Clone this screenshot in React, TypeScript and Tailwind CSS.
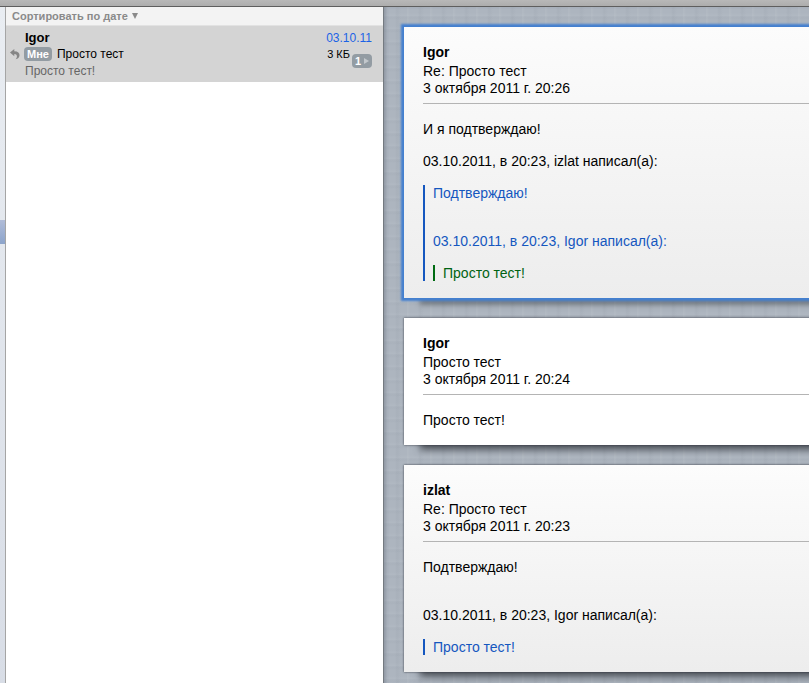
import type { ReactNode } from "react";

interface MessageCardProps {
  from: string;
  subject: string;
  date: string;
  selected?: boolean;
  plain?: boolean;
  children: ReactNode;
}

function MessageCard({ from, subject, date, selected, plain, children }: MessageCardProps) {
  const frame = selected
    ? "shadow-[0_0_2px_3px_#4480cf,16px_7px_5px_rgba(60,65,72,0.5)]"
    : "shadow-[0_0_2px_rgba(40,44,52,0.9),16px_5px_7px_rgba(50,54,60,0.75)]";
  const fill = plain ? "bg-white" : "bg-linear-to-b from-[#fcfcfc] to-[#ededed]";

  return (
    <article className={`px-[19px] py-[17px] text-sm leading-4 text-black ${frame} ${fill}`}>
      <header className="mb-[17px] border-b border-[#b4b4b4] pb-[6px]">
        <h2 className="mb-[3px] font-bold">{from}</h2>
        <p className="leading-[17px]">{subject}</p>
        <p className="leading-[17px]">{date}</p>
      </header>
      <div className="flex flex-col gap-4">{children}</div>
    </article>
  );
}

function Quote({ nested, children }: { nested?: boolean; children: ReactNode }) {
  const color = nested ? "border-[#006b12] text-[#006312]" : "border-[#1557bf] text-[#1557bf]";
  return <blockquote className={`flex flex-col gap-4 border-l-2 pl-2 ${color}`}>{children}</blockquote>;
}

function MessageList() {
  return (
    <section className="w-[378px] shrink-0 border-r border-[#747a80] bg-white">
      <button
        type="button"
        className="flex h-[19px] w-full items-center gap-1 border-b border-[#e2e2e2] bg-[#f3f3f3] px-[6px] text-[11px] font-bold text-[#8a8a8a]"
      >
        Сортировать по дате
        <svg width="6" height="6" viewBox="0 0 6 6" fill="currentColor" aria-hidden="true">
          <path d="M0 0h6L3 6z" />
        </svg>
      </button>

      <ul>
        <li className="flex h-14 justify-between bg-[#d4d4d4] pt-1 pr-[11px] pl-1">
          <div className="grid grid-cols-[15px_auto] grid-rows-[16px_16px_18px] items-center text-xs">
            <span className="col-start-2 text-[13px] font-bold">Igor</span>
            <svg className="col-start-1" width="10" height="12" viewBox="0 0 10 12" aria-label="Отвечено" role="img">
              <path d="M0 4.5 4.3 1v2.3C8 3.3 9.7 5 9.5 7.4 9.4 9.3 8 10.8 5.6 11.2 7.6 9.6 7.6 6 4.3 6v2.2z" fill="#858585" />
            </svg>
            <span className="flex items-center gap-[5px]">
              <span className="-ml-px h-[14px] rounded bg-[#939ca3] px-[3px] text-[11px] leading-[14px] font-bold text-white">Мне</span>
              Просто тест
            </span>
            <span className="col-start-2 text-[#666]">Просто тест!</span>
          </div>
          <div className="flex flex-col items-end">
            <time className="text-xs leading-4 text-[#1b63e6]">03.10.11</time>
            <div className="flex items-start gap-[2px]">
              <span className="text-[11px] leading-4">3 КБ</span>
              <button
                type="button"
                aria-label="Показать 1 сообщение"
                className="mt-2 flex h-[14px] w-5 items-center justify-center gap-[3px] rounded bg-[#939ca3] text-[11px] leading-[14px] font-bold text-white"
              >
                1
                <svg width="5" height="6" viewBox="0 0 5 6" fill="#c3c8cc" aria-hidden="true">
                  <path d="M0 0l5 3-5 3z" />
                </svg>
              </button>
            </div>
          </div>
        </li>
      </ul>
    </section>
  );
}

export default function App() {
  return (
    <div className="flex min-h-screen flex-col overflow-hidden bg-white font-['Liberation_Sans',Arial,sans-serif]">
      {/* Bottom edge of the window toolbar */}
      <div className="h-[7px] border-b border-[#5e5e5e] bg-linear-to-b from-[#b8b8b8] to-[#adadad]" />

      <div className="flex flex-1">
        {/* Mailboxes, collapsed to a sliver */}
        <nav aria-label="Ящики" className="w-[6px] shrink-0 border-r border-[#a5a5a5] bg-linear-to-b from-[#e9edf2] to-[#d8dde6] pt-[213px]">
          <div className="h-6 bg-linear-to-b from-[#b0bcd8] to-[#8ca4cb]" />
        </nav>

        <MessageList />

        {/* Linen: thin threads at uneven spacing in both directions */}
        <main className="-mr-5 flex min-w-0 flex-1 flex-col gap-5 bg-[#adb5bf] bg-[repeating-linear-gradient(90deg,rgba(255,255,255,0.05)_0_1px,transparent_3px_11px,rgba(60,70,85,0.04)_13px,transparent_17px_23px),repeating-linear-gradient(0deg,rgba(255,255,255,0.04)_0_1px,transparent_3px_9px,rgba(60,70,85,0.03)_11px,transparent_13px)] py-5 pl-5 shadow-[inset_3px_0_3px_-1px_rgba(70,80,95,0.3)]">
          <MessageCard from="Igor" subject="Re: Просто тест" date="3 октября 2011 г. 20:26" selected>
            <p>И я подтверждаю!</p>
            <p>03.10.2011, в 20:23, izlat написал(а):</p>
            <Quote>
              <p className="mb-4">Подтверждаю!</p>
              <p>03.10.2011, в 20:23, Igor написал(а):</p>
              <Quote nested>
                <p>Просто тест!</p>
              </Quote>
            </Quote>
          </MessageCard>

          <MessageCard from="Igor" subject="Просто тест" date="3 октября 2011 г. 20:24" plain>
            <p>Просто тест!</p>
          </MessageCard>

          <MessageCard from="izlat" subject="Re: Просто тест" date="3 октября 2011 г. 20:23">
            <p className="mb-4">Подтверждаю!</p>
            <p>03.10.2011, в 20:23, Igor написал(а):</p>
            <Quote>
              <p>Просто тест!</p>
            </Quote>
          </MessageCard>
        </main>
      </div>
    </div>
  );
}
